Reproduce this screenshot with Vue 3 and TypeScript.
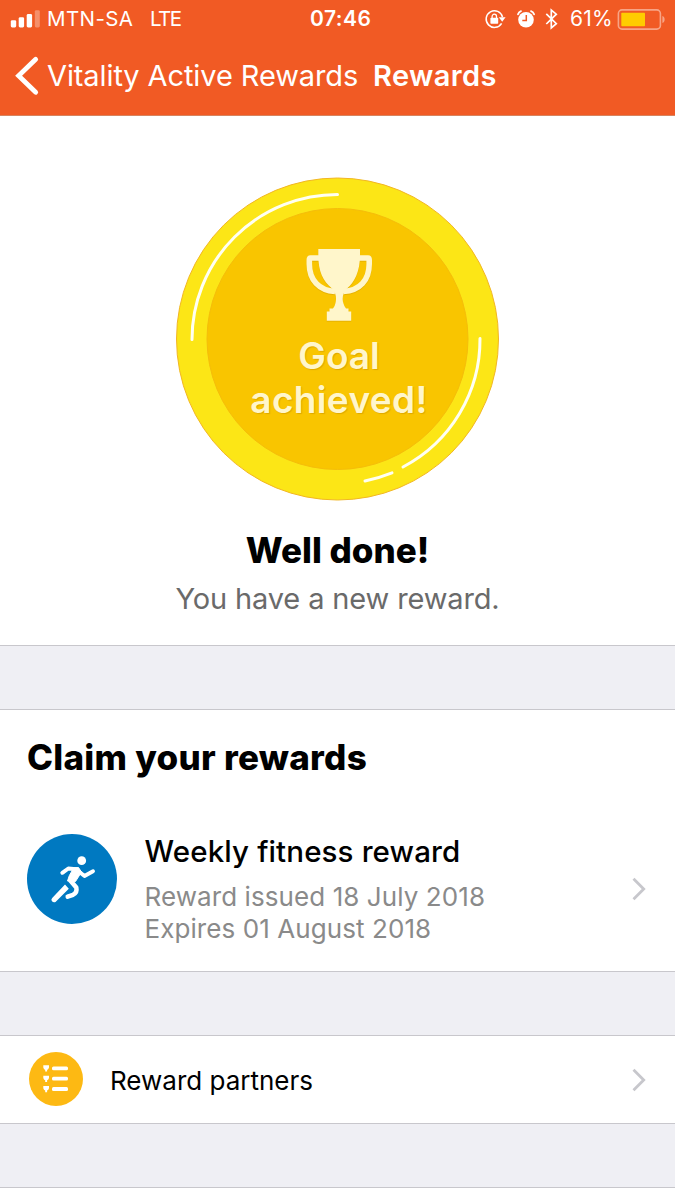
<script setup lang="ts">
interface Reward {
  title: string
  issued: string
  expires: string
}

const reward: Reward = {
  title: 'Weekly fitness reward',
  issued: 'Reward issued 18 July 2018',
  expires: 'Expires 01 August 2018',
}
</script>

<template>
  <div class="screen">
    <header class="header">
      <div class="status">
        <div class="status-left">
          <svg class="signal" width="30" height="20" viewBox="0 0 30 20" fill="#fff">
            <rect x="0.8" y="11.2" width="5.4" height="7.2" rx="1.4" />
            <rect x="8.7" y="8.2" width="5.4" height="10.2" rx="1.4" />
            <rect x="16.7" y="5" width="5.4" height="13.4" rx="1.4" />
            <rect x="24.8" y="1.2" width="5" height="17.2" rx="1.4" opacity="0.32" />
          </svg>
          <span class="carrier">MTN-SA</span>
          <span class="network">LTE</span>
        </div>
        <span class="clock">07:46</span>
        <div class="status-right">
          <svg class="status-icons" width="76" height="24" viewBox="484 6 76 24" fill="none" stroke="#fff">
            <path d="M501.600 22.300A8.300 8.300 0 1 1 502.500 16" stroke-width="1.500" />
            <path d="M498.800 16.200h6.800l-3.400 4.600z" fill="#fff" stroke="none" />
            <rect x="490.400" y="16.700" width="7.800" height="6" rx="0.800" fill="#fff" stroke="none" />
            <path d="M492.100 17.200v-1.800a2.200 2.200 0 0 1 4.400 0v1.800" stroke-width="1.300" />
            <circle cx="526" cy="18.700" r="7.800" fill="#fff" stroke="none" />
            <path d="M526.300 14v5.400h-4" stroke="#f15a24" stroke-width="1.500" />
            <path d="M518 13.300q.7-2.400 3-3.200M531 10.100q2.400.8 3.100 3.200" stroke-width="1.800" stroke-linecap="round" />
            <path d="M546.300 12.900l10 9.800-5 4.200V9l5 4.200-10 9.800" stroke-width="1.700" />
          </svg>
          <span class="percent">61%</span>
          <svg class="battery" width="50" height="24" viewBox="616 6 50 24" fill="none">
            <rect x="618.400" y="8.900" width="42" height="19.200" rx="3.600" stroke="#fff" stroke-opacity="0.450" stroke-width="1.600" />
            <rect x="621.300" y="11.800" width="23.700" height="13.400" rx="0.800" fill="#ffcc00" />
            <path d="M662.400 15c3 .8 3 6.200 0 7z" fill="#fff" fill-opacity="0.450" />
          </svg>
        </div>
      </div>
      <nav class="nav">
        <svg class="back" width="26" height="42" viewBox="14 55 26 42" fill="none">
          <path d="M35.700 59.300L18.600 75.800L35.700 92.300" stroke="#fff" stroke-width="4.800" stroke-linecap="round" stroke-linejoin="miter" />
        </svg>
        <span class="parent">Vitality Active Rewards</span>
        <h1 class="current">Rewards</h1>
      </nav>
    </header>

    <section class="hero">
      <div class="medal">
        <svg class="medal-art" width="325" height="325" viewBox="175 177 325 325" fill="none">
          <circle cx="337.500" cy="339" r="161" fill="#fce616" stroke="#f2b622" />
          <circle cx="337.500" cy="339" r="130.500" fill="#f9c500" stroke="#f5bd0a" />
          <g stroke="#fffff2" stroke-width="3" stroke-linecap="round">
            <path d="M192 339.500A145.500 145 0 0 1 337.500 194.500" />
            <path d="M480 338.500A144 144 0 0 1 403 467" />
            <path d="M392 472.800Q379 478 365 481" />
          </g>
          <g class="trophy" fill="#fff6cb">
            <path d="M318.300 249H360v6C360 272 354.500 282 347 288.500C342.500 293 342 299 343.300 303Q344 306 346 308.500H348.500V311.500H351.200V320.700H326.800V311.500H329.500V308.500H333Q335 306 335.500 303C336.500 299 336.500 293 332 288.500C323 281 318.300 272 318.300 255Z" />
            <path d="M319 258H310.500Q309.300 258 309.300 260V264C309.300 280 319 290.500 335 291.500M359 258H368Q369.200 258 369.200 260V264C369.200 280 360 290.500 343.500 291.500" fill="none" stroke="#fff6cb" stroke-width="5.600" />
          </g>
        </svg>
        <p class="medal-text"><span class="goal">Goal</span><span class="achieved">achieved!</span></p>
      </div>
      <h2 class="praise">Well done!</h2>
      <p class="message">You have a new reward.</p>
    </section>

    <section class="claim">
      <h2 class="claim-title">Claim your rewards</h2>
      <div class="reward">
        <svg class="runner" width="90" height="90" viewBox="27 834 90 90" fill="none" stroke="#fff" stroke-linecap="round" stroke-linejoin="round">
          <circle cx="72" cy="879" r="45" fill="#0079c1" stroke="none" />
          <circle cx="81.700" cy="860.700" r="4.400" fill="#fff" stroke="none" />
          <path d="M62.300 872.800L68.300 868.500L76 869.300L84.500 876L93 871.300" stroke-width="3.900" />
          <path d="M70 868L78.500 867.500L81.500 872L75.500 881.500L67.500 881Q68.500 876 72.500 870Z" fill="#fff" stroke-width="1" />
          <path d="M70.300 880.500L76.300 887.500Q77.500 892.500 73 894.800L67.700 896.700" stroke-width="4.500" />
          <path d="M65 884.500L68.800 888.700L55.500 902Q53.500 903 51.800 901Q50.800 899.300 52.200 898Z" fill="#fff" stroke="none" />
        </svg>
        <div class="reward-text">
          <h3 class="reward-title">{{ reward.title }}</h3>
          <p class="detail issued">{{ reward.issued }}</p>
          <p class="detail expires">{{ reward.expires }}</p>
        </div>
        <svg class="chevron" width="16" height="26" viewBox="0 0 16 26" fill="none" stroke="#c7c7cc" stroke-width="2.800">
          <path d="M1.500 2.800L11.700 13L1.500 23.200" />
        </svg>
      </div>
    </section>

    <section class="partners">
      <svg class="list-icon" width="54" height="54" viewBox="29 1051.500 54 54">
        <circle cx="56" cy="1078.500" r="27" fill="#fdb913" />
        <g v-for="y in [1067.800, 1078.200, 1088.500]" :key="y" :transform="`translate(0 ${y})`">
          <path d="M43.300-3h5.700v2.200q-.4 1.800-1.900 2.400v1.700h-1.900V1.600q-1.500-.6-1.900-2.400z" fill="#fff" />
          <rect x="52" y="-1.900" width="16" height="3.800" rx="1.500" fill="#fff" />
        </g>
      </svg>
      <span class="partners-label">Reward partners</span>
      <svg class="chevron" width="16" height="26" viewBox="0 0 16 26" fill="none" stroke="#c7c7cc" stroke-width="2.800">
        <path d="M1.500 2.800L11.700 13L1.500 23.200" />
      </svg>
    </section>

    <div class="footer-line"></div>
  </div>
</template>

<style>
body {
  margin: 0;
  background: #fff;
}
</style>

<style scoped>
.screen {
  display: flex;
  flex-direction: column;
  box-sizing: border-box;
  width: 675px;
  height: 1200px;
  overflow: hidden;
  background: #efeff4;
  font-family: Inter, "Liberation Sans", sans-serif;
  color: #000;
}
h1, h2, h3, p {
  margin: 0;
}
span, h1, h2, h3, p {
  white-space: nowrap;
}
svg {
  display: block;
  flex: none;
}
.header {
  box-sizing: border-box;
  height: 116px;
  background: #f15a24;
  border-bottom: 1px solid #d7845f;
  color: #fff;
}
.status {
  display: grid;
  grid-template-columns: 310px 1fr 191px;
  align-items: center;
  height: 37px;
  font-size: 20.500px;
  line-height: 37px;
}
.status-left, .status-right {
  display: flex;
  align-items: center;
}
.signal {
  margin-left: 10px;
}
.carrier {
  margin-left: 7px;
  width: 103px;
  letter-spacing: 0.400px;
}
.network {
  letter-spacing: -1.500px;
}
.clock {
  font-size: 21px;
  font-weight: 600;
  letter-spacing: 0.500px;
}
.percent {
  width: 46px;
  margin-left: 10px;
  font-size: 21px;
  letter-spacing: 0.200px;
}
.nav {
  display: flex;
  align-items: center;
  height: 78px;
  font-size: 29px;
  line-height: 78px;
}
.back {
  margin-left: 14px;
}
.parent {
  width: 326px;
  margin-left: 7px;
  letter-spacing: -0.100px;
}
.current {
  font-size: 29px;
  font-weight: 600;
  letter-spacing: 0.400px;
}
.hero {
  box-sizing: border-box;
  display: flex;
  flex-direction: column;
  align-items: center;
  height: 530px;
  padding-top: 61px;
  background: #fff;
  border-bottom: 1px solid #c8c7cc;
}
.medal {
  display: grid;
  width: 325px;
  height: 325px;
}
.medal-art, .medal-text {
  grid-area: 1 / 1;
}
.trophy {
  filter: drop-shadow(0.500px 1px 0.500px rgba(214, 160, 0, 0.500));
}
.medal-text {
  display: flex;
  flex-direction: column;
  align-items: center;
  padding: 157px 0 0 3px;
  font-size: 37px;
  font-weight: 600;
  line-height: 44px;
  color: #fff6cb;
  text-shadow: 1px 1px 1px rgba(205, 150, 0, 0.600);
}
.achieved {
  letter-spacing: 0.350px;
}
.praise {
  margin-top: 26px;
  font-size: 35px;
  font-weight: 800;
  line-height: 44px;
}
.message {
  margin-top: 7px;
  font-size: 29px;
  line-height: 40px;
  letter-spacing: -0.140px;
  color: #6a6a6a;
}
.claim {
  box-sizing: border-box;
  height: 263px;
  margin-top: 63px;
  padding-left: 27px;
  background: #fff;
  border-top: 1px solid #c8c7cc;
  border-bottom: 1px solid #c8c7cc;
}
.claim-title {
  padding-top: 25px;
  font-size: 35px;
  font-weight: 800;
  line-height: 44px;
  letter-spacing: 0.280px;
}
.reward {
  display: flex;
  margin-top: 55px;
}
.reward-text {
  width: 487.500px;
  margin-left: 27.500px;
}
.reward-title {
  font-size: 29.500px;
  font-weight: 500;
  line-height: 34px;
  letter-spacing: 0.130px;
}
.detail {
  font-size: 26px;
  line-height: 32px;
  letter-spacing: 0.080px;
  color: #8a8a8a;
}
.issued {
  margin-top: 13px;
}
.reward .chevron {
  margin-top: 42px;
}
.partners {
  box-sizing: border-box;
  display: flex;
  align-items: center;
  height: 89px;
  margin-top: 63px;
  padding-left: 29px;
  background: #fff;
  border-top: 1px solid #c8c7cc;
  border-bottom: 1px solid #c8c7cc;
}
.list-icon {
  margin-top: -2px;
}
.partners-label {
  width: 522px;
  margin-left: 27px;
  padding-top: 3px;
  font-size: 26px;
  line-height: 36px;
}
.footer-line {
  flex: 1;
  margin-top: 63px;
  background: #fff;
  border-top: 1px solid #c8c7cc;
}
</style>
